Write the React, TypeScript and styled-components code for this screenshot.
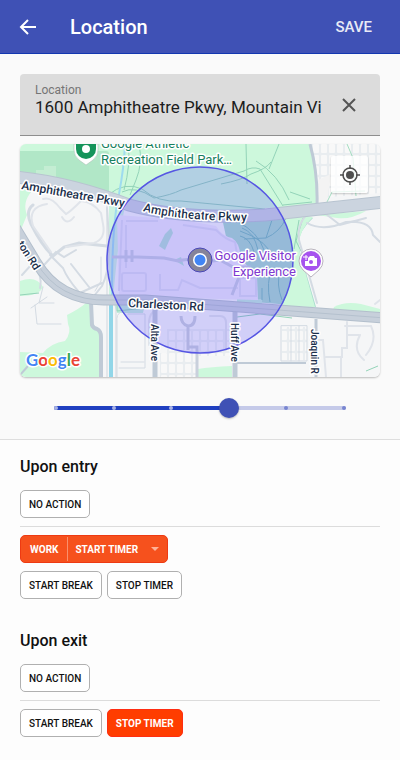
import React, { useState } from "react";
import styled, { createGlobalStyle } from "styled-components";

const GlobalStyle = createGlobalStyle`
  *, *::before, *::after { box-sizing: border-box; }
  body {
    margin: 0;
    background: #fdfdfd;
    color: #111;
    font-family: Roboto, "Liberation Sans", sans-serif;
  }
  button, input, select { font: inherit; color: inherit; margin: 0; }
`;

const AppBar = styled.header`
  display: flex;
  align-items: center;
  height: 54px;
  padding: 0 20px 0 12px;
  background: #3f51b5;
  border-bottom: 1px solid #1237b0;
  box-shadow: 0 1px 4px rgba(0, 0, 0, 0.18);
  color: #fff;
`;

const BarIconButton = styled.button`
  display: flex;
  width: 32px;
  height: 32px;
  align-items: center;
  justify-content: center;
  padding: 0;
  border: 0;
  background: none;
`;

const Title = styled.h1`
  flex: 1;
  margin: 0 0 0 26px;
  font-size: 20px;
  line-height: 24px;
  font-weight: 500;
`;

const SaveButton = styled.button`
  padding: 8px;
  border: 0;
  background: none;
  color: #e8eaf6;
  font-size: 15px;
  line-height: 16px;
  font-weight: 500;
`;

const LocationPanel = styled.section`
  padding: 20px 20px 0;
  background: #fafafa;
  border-bottom: 1px solid #dedede;
`;

const Field = styled.div`
  display: flex;
  align-items: center;
  height: 62px;
  padding: 0 20px 0 15px;
  background: #dcdcdc;
  border-bottom: 1px solid #8e8e8e;
  border-radius: 4px 4px 0 0;
`;

const FieldText = styled.div`
  display: flex;
  flex: 1;
  min-width: 0;
  flex-direction: column;
  padding-bottom: 10px;
`;

const FieldLabel = styled.label`
  color: #757575;
  font-size: 12px;
  line-height: 14px;
`;

const FieldInput = styled.input`
  width: 100%;
  padding: 0;
  border: 0;
  outline: 0;
  background: none;
  color: #1c1c1c;
  font-size: 17px;
  line-height: 20px;
`;

const ClearButton = styled.button`
  display: flex;
  margin-left: 8px;
  padding: 4px;
  border: 0;
  background: none;
`;

const MapCard = styled.div`
  position: relative;
  margin-top: 8px;
  overflow: hidden;
  border-radius: 6px;
  box-shadow: 0 1px 2px rgba(0, 0, 0, 0.25);

  > svg { display: block; width: 100%; height: auto; }
`;

const LocateButton = styled.button`
  position: absolute;
  top: 12px;
  right: 12px;
  display: flex;
  width: 37px;
  height: 37px;
  align-items: center;
  justify-content: center;
  padding: 0;
  border: 0;
  border-radius: 2px;
  background: rgba(255, 255, 255, 0.78);
  box-shadow: 0 1px 2px rgba(0, 0, 0, 0.2);
`;

const SliderBox = styled.div`
  position: relative;
  height: 20px;
  margin: 21px 26px 21px;
`;

const Track = styled.div`
  position: absolute;
  top: 8px;
  left: 8px;
  right: 8px;
  display: flex;
  height: 4px;
  align-items: center;
  justify-content: space-between;
  border-radius: 2px;
  background: #c5cae9;
`;

const TrackFill = styled.div`
  position: absolute;
  top: 0;
  left: 0;
  height: 4px;
  border-radius: 2px;
  background: #1f3fc0;
`;

const Tick = styled.span<{ $passed: boolean }>`
  position: relative;
  width: 4px;
  height: 4px;
  border-radius: 2px;
  background: ${(p) => (p.$passed ? "#a9b3e3" : "#7885d0")};
`;

const Range = styled.input`
  position: relative;
  display: block;
  width: 100%;
  height: 20px;
  appearance: none;
  background: none;

  &::-webkit-slider-thumb {
    appearance: none;
    width: 20px;
    height: 20px;
    border: 0;
    border-radius: 50%;
    background: #3f51b5;
    box-shadow: 0 1px 2px rgba(0, 0, 0, 0.25);
  }
`;

const Triggers = styled.main`
  display: flex;
  flex-direction: column;
  gap: 32px;
  padding: 17px 20px 23px;
`;

const Group = styled.section`
  display: flex;
  flex-direction: column;
  gap: 8px;
`;

const Heading = styled.h2`
  margin: 0 0 5px;
  font-size: 16px;
  line-height: 20px;
  font-weight: 500;
`;

const Divider = styled.hr`
  width: 100%;
  height: 1px;
  margin: 0;
  border: 0;
  background: #dcdcdc;
`;

const Row = styled.div`
  display: flex;
  flex-wrap: wrap;
  gap: 5px;
`;

const Chip = styled.button<{ $active?: boolean }>`
  height: 28px;
  padding: 0 8px;
  border: 1px solid ${(p) => (p.$active ? "#ff2d12" : "#b0b0b0")};
  border-radius: 5px;
  background: ${(p) => (p.$active ? "#ff3d00" : "#fff")};
  color: ${(p) => (p.$active ? "#fff" : "#111")};
  font-size: 10px;
  font-weight: ${(p) => (p.$active ? 700 : 500)};
`;

const SplitChip = styled.div`
  display: flex;
  height: 28px;
  align-items: center;
  border: 1px solid #ee3a12;
  border-radius: 5px;
  background: #f6511d;
  color: #fff;
  font-size: 10px;
  font-weight: 700;
`;

const SplitButton = styled.button`
  height: 24px;
  padding: 0 9px;
  border: 0;
  border-right: 1px solid #fa8f6c;
  background: none;
`;

const SelectWrap = styled.div`
  position: relative;
  display: flex;
  align-items: center;

  svg { position: absolute; right: 8px; pointer-events: none; }
`;

const ActionSelect = styled.select`
  height: 24px;
  padding: 0 28px 0 7px;
  border: 0;
  appearance: none;
  background: none;

  option { color: #111; }
`;

const MapText = styled.text<{ $size?: number; $weight?: number; $tone: string }>`
  font-family: Roboto, sans-serif;
  font-size: ${(p) => p.$size ?? 12}px;
  font-weight: ${(p) => p.$weight ?? 500};
  fill: ${(p) => p.$tone};
  stroke: #fff;
  stroke-width: 3px;
  stroke-linejoin: round;
  paint-order: stroke;
`;

const LogoText = styled.text`
  font-family: Lato, sans-serif;
  font-size: 17px;
  font-weight: 700;
  stroke: #fff;
  stroke-width: 3px;
  stroke-linejoin: round;
  paint-order: stroke;
`;

const ROAD = "#1b2f4b";
const PARK = "#16805e";
const PLACE = "#8038d0";

function AreaMap() {
  return (
    <svg viewBox="20 144 360 233" role="img" aria-label="Map of Mountain View">
      <defs>
        <pattern id="lots" width="8" height="11" patternUnits="userSpaceOnUse">
          <rect width="8" height="11" fill="#e9edf0" />
          <rect x="1" y="1" width="6" height="9" rx="1" fill="#f8f8f8" />
        </pattern>
        <path id="amphi" d="M143 211Q178 221 256 221" />
      </defs>
      <rect x="20" y="144" width="360" height="233" fill="#f5f6f7" />

      {/* parks */}
      <path d="M20 144H310Q318 172 317 205L200 212L108 198L20 176Z" fill="#cdf8dc" />
      <path d="M20 151H106Q109 151 109 154V197L20 175Z" fill="#b1e7c7" />
      <path d="M36 177V170H44V166H56V184Z" fill="#c4edd3" />
      <path d="M20 188L32 191Q22 202 27 215L20 232Z" fill="#cdf8dc" />
      <path d="M112 203L125 206Q118 240 113 300V377H109V200Z" fill="#cdf3e0" />
      <path d="M20 281Q36 275 43 287Q39 296 20 296Z" fill="#cdf8dc" />
      <path d="M67 315Q79 309 86 303L92 305L91 328L99 331V377H20V352L43 353Q51 343 65 341Q72 332 68 324Z" fill="#cdf8dc" />
      <path d="M222 218H313Q294 235 300 252L316 307L240 301Z" fill="#a9dcce" />
      <path d="M280 213L313 217Q295 234 300 253L315 307L282 306Q300 270 289 232Z" fill="#cdf8dc" />
      <path d="M334 307Q345 301 361 304L380 309V314L333 310Z" fill="#cdf8dc" />
      <path d="M317 215L366 211Q350 220 337 218Z" fill="#cdf8dc" />
      <path d="M198 369Q210 367 232 366V377H198Z" fill="#cdf8dc" />
      <path d="M114 304H145L143 313H117ZM237 299H262V305H237Z" fill="#c0ebdb" />

      {/* parcels and buildings */}
      <path d="M310 144H380V193L319 198Q319 170 310 144Z" fill="url(#lots)" />
      <path d="M318 180L331 174L327 202H318Z" fill="#f3f3f3" />
      <path d="M160 353H197V377H160ZM167 329H231V356H167ZM282 327H307V360H282Z" fill="url(#lots)" />
      <path d="M117 215L183 220L216 226Q222 236 232 238Q241 244 240 258L257 276L258 300L119 296Z" fill="#ece8f8" />
      <g fill="none" stroke="#dcdbf0" strokeWidth="2">
        <rect x="122" y="273" width="24" height="18" rx="2" />
        <path d="M122 220L119 291M126 221H158M126 225V268M160 274V290H178L182 280L200 288H238" />
        <path d="M183 225L216 230Q226 240 235 242L238 260" />
        <path d="M240 278H256V296H240Z" />
      </g>
      <path d="M165 234L171 228L173 233L169 241L165 250L159 246ZM174 260L181 257L184 266Z" fill="#b7dfd8" />

      {/* trails */}
      <g fill="none" stroke="#93d3b8" strokeWidth="1">
        <path d="M128 144Q131 164 124 190M139 144Q143 163 136 180L130 195" />
        <path d="M122 192Q135 185 154 198Q171 195 181 190L244 171Q252 166 260 169L283 206" />
        <path d="M108 195Q125 181 142 189Q158 203 181 201L265 209" />
        <path d="M221 184Q242 180 251 174Q266 169 271 162M246 144L247 184" />
        <path d="M256 161Q278 174 289 200M279 144L269 169M290 192L310 199M283 205L312 202" />
        <path d="M303 218L296 241L306 261M299 220L294 249" />
        <path d="M347 144L353 158L356 196M327 202L332 192L365 191" stroke="#a3dec1" />
        <path d="M117 304L117 311L145 308M20 295L39 293" />
        <path d="M237 317L260 314L292 318M366 371L378 366" />
      </g>
      <g fill="none" stroke="#78bdb9" strokeWidth="1">
        <path d="M286 218Q280 232 266 238L244 239M238 222Q258 232 264 250M242 228Q254 232 258 250" />
        <path d="M240 236Q250 238 254 252M272 220L266 238M240 231Q268 240 276 262" />
        <path d="M257 278Q262 266 272 268L288 276M270 302Q266 282 272 268M282 300Q276 284 280 272M262 300V288" />
      </g>

      {/* creek */}
      <path d="M125 144Q124 168 119 194Q112 224 112 292V377" fill="none" stroke="#9edbef" strokeWidth="2" />
      <path d="M111 302V377" stroke="#91d6e8" strokeWidth="4" />
      <path d="M107 205V377M116 304V377" fill="none" stroke="#d1d7de" strokeWidth="1" />

      {/* campus paths */}
      <g fill="none" stroke="#d4dbe3" strokeLinecap="round">
        <path d="M107 208L109 238Q110 270 102 286L94 296" strokeWidth="2" />
        <path d="M33 205Q25 211 31 224Q42 246 53 256L64 247L79 243L107 246" strokeWidth="3" />
        <path d="M47 204Q27 207 33 226L51 252M43 199Q51 196 60 208L66 214Q70 212 81 201Q93 202 101 213L103 224Q106 239 94 243L66 247M62 217Q67 226 74 217" stroke="#e0e4ea" strokeWidth="2" />
        <path d="M45 264L56 252L64 257L76 250M50 255L63 268Q67 278 78 291M42 268L56 282M71 264L89 287M82 292L102 283" strokeWidth="2" />
        <path d="M43 287L39 303H54M35 305L37 324H61M31 308L47 297M101 257V281L95 291" strokeWidth="1" />
        <path d="M22 275L31 265Q43 272 40 288" strokeWidth="2" />
        <path d="M121 312Q116 314 117 322V377M128 314H145V368H119M121 362H144" strokeWidth="1" />
        <path d="M172 309Q151 305 149 321V345M210 316H220Q226 316 226 323V350" stroke="#e0e4ea" strokeWidth="2" />
        <path d="M314 208Q296 221 299 240L317 303M307 223Q323 232 346 222Q371 220 373 235L380 242M326 214L340 225L366 218" strokeWidth="2" />
        <path d="M318 340H323L326 377M345 326H371Q378 340 366 355M347 322V348H342V357H326M347 335H359M360 335Q352 350 364 360M341 358V377M380 300L375 304" stroke="#e0e4ea" strokeWidth="2" />
        <path d="M281 326V361H307V326ZM291 326V361M299 326V361" strokeWidth="1" />
      </g>

      {/* roads */}
      <g fill="none" stroke="#bfcad6">
        <path d="M91 302L92 325Q93 328 97 329Q101 331 101 337V377" strokeWidth="4" />
        <path d="M155 306V377M235 311V377" strokeWidth="5" />
        <path d="M195 316Q195 326 188 326Q181 324 181 316M188 326V350M187 347H197V377" strokeWidth="3" stroke="#c9d0dc" />
        <path d="M310 144Q318 173 317 205M316 319V377" strokeWidth="3" />
        <path d="M237 363H306" strokeWidth="2" />
        <path d="M20 375L28 366" strokeWidth="2" />
      </g>
      <path d="M15 177Q69 182 129 205Q184 220 265 215L385 202" fill="none" stroke="#b8c4d0" strokeWidth="13" />
      <path d="M15 177Q69 182 129 205Q184 220 265 215L385 202" fill="none" stroke="#cbd4df" strokeWidth="11" />
      <path d="M12 222L36 262Q48 282 65 291Q84 301 108 300H145L265 309L385 318" fill="none" stroke="#b3bfcc" strokeWidth="11" />
      <path d="M12 222L36 262Q48 282 65 291Q84 301 108 300H145L265 309L385 318" fill="none" stroke="#c7d0db" strokeWidth="9" />
      <path d="M36 262Q48 282 65 291Q84 301 108 300H145L265 309L385 318" fill="none" stroke="#b5c1ce" strokeWidth="1" />
      <path d="M112 257H137L164 258L178 261Q190 257 199 263L220 260L233 267H248L239 277L232 295M126 250V262M132 250V262" fill="none" stroke="#c8cde2" strokeWidth="3" />

      {/* radius */}
      <circle cx="200" cy="260" r="93" fill="#5046ff" fillOpacity=".22" stroke="#5656e3" strokeWidth="1.5" />

      {/* labels */}
      <MapText x="101" y="148" $size={13} $weight={400} $tone={PARK}>Google Athletic</MapText>
      <MapText x="101" y="164" $size={13} $weight={400} $tone={PARK}>Recreation Field Park…</MapText>
      <MapText transform="translate(21 189) rotate(10)" $tone={ROAD}>Amphitheatre Pkwy</MapText>
      <MapText $tone={ROAD}><textPath href="#amphi">Amphitheatre Pkwy</textPath></MapText>
      <MapText transform="translate(128 307) rotate(3)" $tone={ROAD}>Charleston Rd</MapText>
      <MapText transform="translate(17 244) rotate(57)" $size={11} $tone={ROAD}>ton Rd</MapText>
      <MapText transform="translate(151 324) rotate(90)" $size={10} $tone={ROAD}>Alta Ave</MapText>
      <MapText transform="translate(231 323) rotate(90)" $size={10} $tone={ROAD}>Huff Ave</MapText>
      <MapText transform="translate(311 329) rotate(90)" $size={10} $tone={ROAD}>Joaquin R</MapText>
      <MapText x="296" y="260" textAnchor="end" $size={13} $weight={400} $tone={PLACE}>Google Visitor</MapText>
      <MapText x="296" y="276" textAnchor="end" $size={13} $weight={400} $tone={PLACE}>Experience</MapText>

      {/* park pin */}
      <path d="M74 144V150Q74 156 79 160L86 165L93 160Q98 156 98 150V144Z" fill="#fff" stroke="#a8b8b0" strokeWidth=".5" />
      <path d="M76 144V149A10 10 0 0 0 96 149V144Z" fill="#15945a" />
      <circle cx="86" cy="149" r="4" fill="#fff" />

      {/* visitor centre pin */}
      <path d="M311 277L303 270Q299 266 299 261A12 12 0 0 1 323 261Q323 266 319 270Z" fill="#fff" stroke="#b9b4be" strokeWidth="1" />
      <circle cx="311" cy="261" r="10" fill="#a653ee" />
      <path d="M308 258L310 256H314L315 258H317V266H305V261H308Z" fill="#fff" />
      <circle cx="311" cy="262" r="2" fill="#a653ee" />
      <path d="M306 255V260M303 257H308" stroke="#fff" strokeWidth="1" />

      {/* current position */}
      <circle cx="200" cy="260" r="12" fill="#85839a" stroke="#4948b7" strokeWidth="1" />
      <circle cx="200" cy="260" r="7" fill="#fff" />
      <circle cx="200" cy="260" r="5.500" fill="#4285f4" />

      <LogoText x="26" y="366">
        <tspan fill="#4285f4">G</tspan>
        <tspan fill="#ea4335">o</tspan>
        <tspan fill="#fbbc05">o</tspan>
        <tspan fill="#4285f4">g</tspan>
        <tspan fill="#34a853">l</tspan>
        <tspan fill="#ea4335">e</tspan>
      </LogoText>
    </svg>
  );
}

const STEPS = [0, 1, 2, 3, 4, 5];

export default function App() {
  const [address, setAddress] = useState("1600 Amphitheatre Pkwy, Mountain Vi");
  const [radius, setRadius] = useState(3);

  return (
    <>
      <GlobalStyle />
      <AppBar>
        <BarIconButton aria-label="Back">
          <svg width="20" height="20" viewBox="0 0 20 20" fill="none" stroke="#fff" strokeWidth="2">
            <path d="M18 10H3M10 3L3 10L10 17" />
          </svg>
        </BarIconButton>
        <Title>Location</Title>
        <SaveButton>SAVE</SaveButton>
      </AppBar>

      <LocationPanel>
        <Field>
          <FieldText>
            <FieldLabel htmlFor="location">Location</FieldLabel>
            <FieldInput id="location" value={address} onChange={(e) => setAddress(e.target.value)} />
          </FieldText>
          <ClearButton aria-label="Clear location" onClick={() => setAddress("")}>
            <svg width="14" height="14" viewBox="0 0 14 14" stroke="#555" strokeWidth="2">
              <path d="M1 1L13 13M13 1L1 13" />
            </svg>
          </ClearButton>
        </Field>

        <MapCard>
          <AreaMap />
          <LocateButton aria-label="Show my location">
            <svg width="20" height="20" viewBox="0 0 20 20" fill="none" stroke="#4f4f4f" strokeWidth="1.5">
              <circle cx="10" cy="10" r="7" />
              <circle cx="10" cy="10" r="4" fill="#4f4f4f" stroke="none" />
              <path d="M10 0V4M10 16V20M0 10H4M16 10H20" />
            </svg>
          </LocateButton>
        </MapCard>

        <SliderBox>
          <Track>
            <TrackFill style={{ width: `${radius * 20}%` }} />
            {STEPS.map((s) => (
              <Tick key={s} $passed={s < radius} />
            ))}
          </Track>
          <Range
            type="range"
            min={0}
            max={5}
            value={radius}
            aria-label="Radius"
            onChange={(e) => setRadius(Number(e.target.value))}
          />
        </SliderBox>
      </LocationPanel>

      <Triggers>
        <Group>
          <Heading>Upon entry</Heading>
          <Row>
            <Chip>NO ACTION</Chip>
          </Row>
          <Divider />
          <Row>
            <SplitChip>
              <SplitButton>WORK</SplitButton>
              <SelectWrap>
                <ActionSelect aria-label="Entry action" defaultValue="start">
                  <option value="start">START TIMER</option>
                </ActionSelect>
                <svg width="8" height="4" viewBox="0 0 8 4">
                  <path d="M0 0H8L4 4Z" fill="#ffb297" />
                </svg>
              </SelectWrap>
            </SplitChip>
          </Row>
          <Row>
            <Chip>START BREAK</Chip>
            <Chip>STOP TIMER</Chip>
          </Row>
        </Group>

        <Group>
          <Heading>Upon exit</Heading>
          <Row>
            <Chip>NO ACTION</Chip>
          </Row>
          <Divider />
          <Row>
            <Chip>START BREAK</Chip>
            <Chip $active>STOP TIMER</Chip>
          </Row>
        </Group>
      </Triggers>
    </>
  );
}
